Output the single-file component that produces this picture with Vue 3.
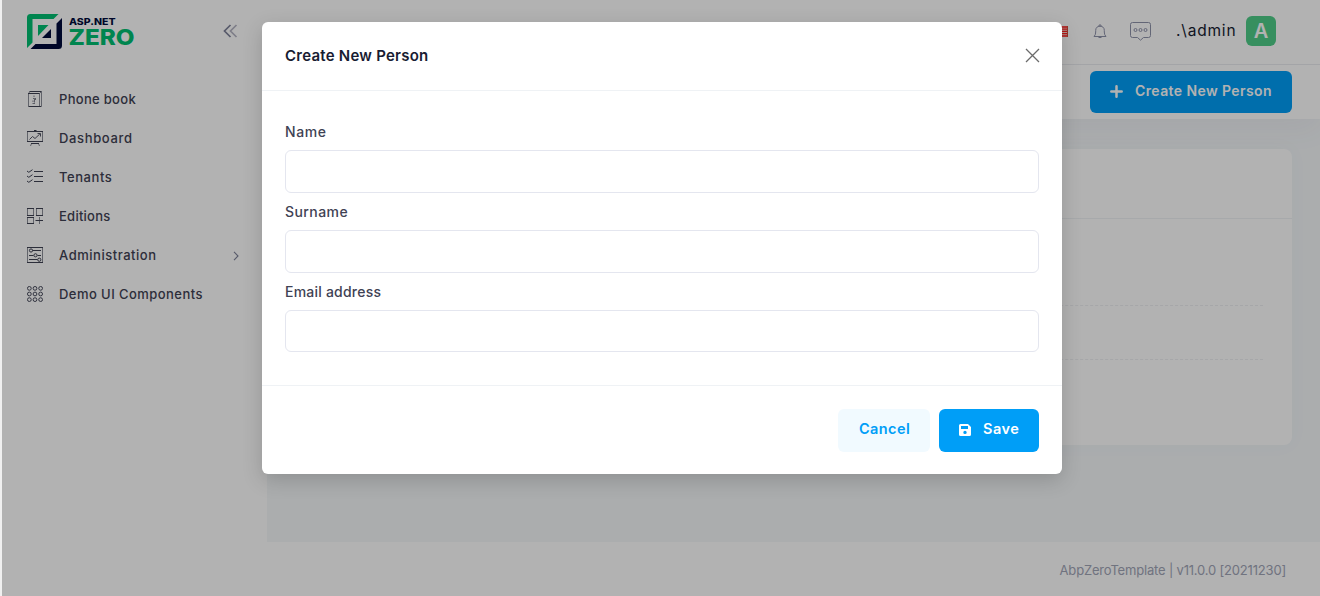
<script setup>
const menu = [
  { label: 'Phone book', icon: 'book', cls: 'm-book' },
  { label: 'Dashboard', icon: 'board', cls: 'm-dash' },
  { label: 'Tenants', icon: 'list', cls: 'm-ten' },
  { label: 'Editions', icon: 'grid', cls: 'm-edi' },
  { label: 'Administration', icon: 'admin', cls: 'm-adm', arrow: true },
  { label: 'Demo UI Components', icon: 'dots', cls: 'm-demo' },
]
const fields = [
  { label: 'Name', cls: 'f-name' },
  { label: 'Surname', cls: 'f-sur' },
  { label: 'Email address', cls: 'f-mail' },
]
const circles = [2.5, 8.5, 14.5]
</script>

<template>
  <div class="app">
    <aside class="sidebar">
      <div class="brand">
        <svg class="logo" width="110" height="37" viewBox="0 0 110 37">
          <path fill="#00bf71" d="M0 35V4.500Q0 1 3.500 1H31.500L26.500 6H5.500V29.500Z" />
          <path fill="#000b3c" d="M35 5V32.500Q35 36 31.500 36H3.500L8.500 31H29.500V10.500Z" />
          <path fill="#00bf71" d="M11 12H21.500L11 23Z" />
          <path fill="#000b3c" d="M24 16V25H15Z" />
          <text class="lt small" x="42" y="11.800" textLength="46.500" lengthAdjust="spacingAndGlyphs">ASP.NET</text>
          <text class="lt big" x="41.500" y="31.500" textLength="66" lengthAdjust="spacingAndGlyphs">ZERO</text>
        </svg>
        <svg class="collapse" width="15" height="14" viewBox="0 0 15 14" fill="none" stroke-width="1.700">
          <path stroke="#7e8299" d="M7.500 1 1.500 7l6 6" />
          <path stroke="#b5b5c3" d="M13.500 1 7.500 7l6 6" />
        </svg>
      </div>
      <nav>
        <a v-for="m in menu" :key="m.label" class="item">
          <svg class="mi" width="16" height="16" viewBox="0 0 16 16" fill="none" stroke="#3f4254">
            <template v-if="m.icon === 'book'">
              <path d="M1 2.500h11.500M1.500 15.500h13M2.500.5h12" />
              <path d="M1.500 2.500v13M12.500 2.500v12.500M14.500 1v14M1.500 2.500l1.500-2M12.500 2.500l2-2" stroke-opacity=".6" />
              <path d="M7 4.500v1.500M6 7.500h1.500v4M5.500 12.500h2.500M8.500 7v2M6 9.500v1.500" stroke-opacity=".65" />
            </template>
            <template v-else-if="m.icon === 'board'">
              <path d="M0 1.500h16M0 11.500h16M7 .5h2.500M4 13.500h8" />
              <path d="M.5 1.500v10M15.500 1.500v10M4.500 13.500l-1 2.500M11.500 13.500l1 2.500" stroke-opacity=".6" />
              <path d="M2.500 9.500l3-3 2.500 2L12.800 4M10.500 3.500h3v3" stroke-width=".9" />
            </template>
            <template v-else-if="m.icon === 'list'">
              <path d="M7 2.500h9M7 7.500h9M7 12.500h9" />
              <path d="M0 2l1.800 1.300L5.500.7M0 7l1.800 1.300 3.700-2.600M0 12l1.800 1.300 3.700-2.600" />
            </template>
            <template v-else-if="m.icon === 'grid'">
              <path d="M0 .5h7M9 .5h7M0 7.500h7M9 7.500h7M0 9.500h7M0 15.500h7M8.500 12.500H16" />
              <path d="M.5.5v7M6.500.5v7M9.500.5v7M15.500.5v7M.5 9.500v6M6.500 9.500v6M12.500 9v7" stroke-opacity=".6" />
            </template>
            <template v-else-if="m.icon === 'admin'">
              <path d="M0 .5h16M0 15.500h16M5.500 3.500H14M2 8.500h4.500M10.500 8.500H14M2 12.500h8.500" />
              <path d="M.5.5v15M15.500.5v15" stroke-opacity=".6" />
              <circle cx="4" cy="3.500" r="1.600" /><circle cx="8.500" cy="8.300" r="1.600" /><circle cx="12.300" cy="12.700" r="1.600" />
            </template>
            <template v-else>
              <g transform="scale(.94)">
                <template v-for="y in circles" :key="y">
                  <circle v-for="x in circles" :key="x" :cx="x" :cy="y" r="2" />
                </template>
              </g>
            </template>
          </svg>
          <span :class="m.cls">{{ m.label }}</span>
          <svg v-if="m.arrow" class="arrow" width="6" height="10" viewBox="0 0 6 10" fill="none" stroke="#7e8299" stroke-width="1.100"><path d="M1 .8 5 5 1 9.200" /></svg>
        </a>
      </nav>
    </aside>

    <div class="main">
      <header class="top">
        <svg class="flag" width="18" height="11" viewBox="0 0 18 11">
          <path fill="#f7d8d0" d="M0 0h18v11H0z" />
          <path stroke="#ff1c1c" stroke-width="1.300" d="M0 1h18M0 3.200h18M0 5.400h18M0 7.600h18M0 10h18" />
          <path stroke="#d54b38" d="M17.500 0v11" />
        </svg>
        <svg class="bell" width="14" height="15" viewBox="0 0 14 15" fill="none" stroke="#8e92aa">
          <path d="M1 12.500Q2.700 11 2.700 8V6.500Q2.700 2.300 7 2.300T11.300 6.500V8Q11.300 11 13 12.500ZM6 2V1h2v1M5.500 13.500h3" />
        </svg>
        <svg class="chat" width="21" height="19" viewBox="0 0 21 19" fill="none" stroke="#8e92aa">
          <path d="M2.500.5h16q2 0 2 2v11q0 2-2 2h-5l-3 2.700-3-2.700h-5q-2 0-2-2v-11q0-2 2-2z" />
          <circle cx="5.500" cy="8" r="1.500" /><circle cx="10.500" cy="8" r="1.500" /><circle cx="15.500" cy="8" r="1.500" />
        </svg>
        <span class="user">.\admin</span>
        <span class="avatar">A</span>
      </header>
      <div class="toolbar">
        <button class="create">
          <svg width="13" height="13" viewBox="0 0 13 13" stroke="#fff" stroke-width="2.500" stroke-linecap="round"><path d="M6.500 1.300v10.400M1.300 6.500h10.400" /></svg>
          <span>Create New Person</span>
        </button>
      </div>
      <div class="content">
        <div class="card">
          <div class="card-head"></div>
          <div class="row first"></div>
          <div class="row second"></div>
        </div>
      </div>
      <footer class="foot"><span>AbpZeroTemplate | v11.0.0 [20211230]</span></footer>
    </div>

    <div class="backdrop">
      <section class="modal">
        <div class="modal-head">
          <h5>Create New Person</h5>
          <svg width="15" height="15" viewBox="0 0 15 15" stroke="#6b6b6b" stroke-width="1.300"><path d="M1 1l13 13M14 1 1 14" /></svg>
        </div>
        <div class="modal-body">
          <div v-for="f in fields" :key="f.label" class="field">
            <label><span :class="f.cls">{{ f.label }}</span></label>
            <input type="text" />
          </div>
        </div>
        <div class="modal-foot">
          <button class="cancel"><span>Cancel</span></button>
          <button class="save">
            <svg width="12" height="12" viewBox="0 0 12 12"><path fill="#fff" fill-rule="evenodd" d="M1.500 0H9l3 3v7.500q0 1.500-1.500 1.500h-9Q0 12 0 10.500v-9Q0 0 1.500 0ZM2 2v3h7V2ZM6 6.700a1.700 1.700 0 1 0 0 3.400 1.700 1.700 0 0 0 0-3.400Z" /></svg>
            <span>Save</span>
          </button>
        </div>
      </section>
    </div>
  </div>
</template>

<style>
body { margin: 0; overflow: hidden; }
</style>

<style scoped>
* { box-sizing: border-box; }
.app { position: relative; display: flex; width: 1320px; height: 596px; overflow: hidden; font-family: Inter, "Open Sans", sans-serif; background: #fff; }
button { border: 0; font-family: inherit; padding: 0; display: flex; align-items: center; border-radius: 6px; }
span { white-space: nowrap; }

.sidebar { width: 267px; flex: none; background: #fff; }
.brand { display: flex; height: 80px; padding: 13px 0 0 27px; align-items: flex-start; }
.lt { font-family: Inter, sans-serif; font-weight: 800; }
.small { font-size: 9.500px; fill: #000b3c; }
.big { font-size: 22px; fill: #00bf71; }
.collapse { margin: 11px 0 0 86px; }
.item { display: flex; height: 39px; align-items: center; padding: 0 0 2px 27px; color: #3f4254; font-size: 13px; font-weight: 500; }
.mi { margin: 1px 16px 0 0; flex: none; }
.arrow { margin: 3px 28px 0 auto; }
.m-book { letter-spacing: .3px; }
.m-dash { letter-spacing: .65px; }
.m-ten { letter-spacing: .55px; }
.m-edi { letter-spacing: .25px; }
.m-adm { letter-spacing: .52px; }
.m-demo { letter-spacing: .44px; }

.main { flex: 1; display: flex; flex-direction: column; }
.top { height: 65px; border-bottom: 1px solid #eaebef; display: flex; align-items: center; justify-content: flex-end; padding: 0 44px 2px 0; }
.bell { margin: 0 23px 0 25px; }
.chat { margin-right: 25px; }
.user { width: 60px; font-size: 15.500px; color: #181c32; letter-spacing: .8px; padding-bottom: 1px; }
.avatar { width: 30px; height: 30px; border-radius: 6px; background: #50cd89; color: #fff; display: flex; align-items: center; justify-content: center; font-size: 20px; font-weight: 600; margin-left: 10px; }
.toolbar { position: relative; z-index: 1; background: #fff; height: 54px; padding: 6px 28px 0 0; display: flex; justify-content: flex-end; box-shadow: 0 10px 30px rgba(82, 63, 105, .05); clip-path: inset(0 0 -40px 0); }
.create { width: 202px; height: 42px; background: #009ef7; color: #fff; font-size: 14px; font-weight: 600; padding: 0 0 1px 20px; gap: 12px; letter-spacing: .4px; }
.create span { padding-bottom: 2px; }
.save span, .cancel span { padding-bottom: 3px; }
.content { height: 423px; background: #f5f8fa; padding: 30px 28px 0 30px; }
.card { position: relative; z-index: 2; height: 296px; background: #fff; border-radius: 8px; box-shadow: 0 0 20px rgba(76, 87, 125, .03); }
.card-head { height: 70px; border-bottom: 1px solid #eff2f5; }
.row { margin: 0 29px; border-bottom: 1px dashed #eeeff2; }
.first { height: 87px; }
.second { height: 54px; }
.foot { flex: 1; display: flex; justify-content: flex-end; align-items: center; padding: 1px 34px 0 0; font-size: 13px; color: #a1a5b7; letter-spacing: -.18px; }

.backdrop { position: absolute; z-index: 5; inset: 0; background: rgba(0, 0, 0, .3); border-left: 2px solid #f0f0f0; background-clip: padding-box; display: flex; align-items: flex-start; padding: 22px 0 0 260px; }
.modal { width: 800px; height: 452px; background: #fff; border-radius: 6px; box-shadow: 0 6px 20px rgba(0, 0, 0, .17); display: flex; flex-direction: column; }
.modal-head { height: 69px; border-bottom: 1px solid #eff2f5; display: flex; align-items: center; justify-content: space-between; padding: 0 22px 2px 23px; }
h5 { margin: 0; font-size: 15px; font-weight: 600; color: #181c32; letter-spacing: .24px; }
.modal-body { height: 294px; padding: 27px 23px 0; }
.field { height: 80px; }
label { display: flex; align-items: center; height: 28px; margin-bottom: 4px; padding-bottom: 2px; font-size: 14px; font-weight: 500; color: #3f4254; }
.f-name { letter-spacing: .6px; }
.f-sur { letter-spacing: .42px; }
.f-mail { letter-spacing: .22px; }
input { display: block; width: 754px; height: 43px; border: 1px solid #e4e6ef; border-radius: 6px; background: #fff; padding: 0 12px; }
.field:last-child input { height: 42px; }
.modal-foot { height: 89px; border-top: 1px solid #eff2f5; display: flex; justify-content: flex-end; gap: 9px; padding: 23px 23px 0; }
.cancel, .save { height: 43px; font-size: 14.500px; font-weight: 600; padding-bottom: 1px; }
.cancel { width: 92px; background: #f1faff; color: #009ef7; padding-left: 21px; letter-spacing: .4px; }
.save { width: 100px; background: #009ef7; color: #fff; padding-left: 20px; gap: 12px; letter-spacing: .5px; }
</style>
